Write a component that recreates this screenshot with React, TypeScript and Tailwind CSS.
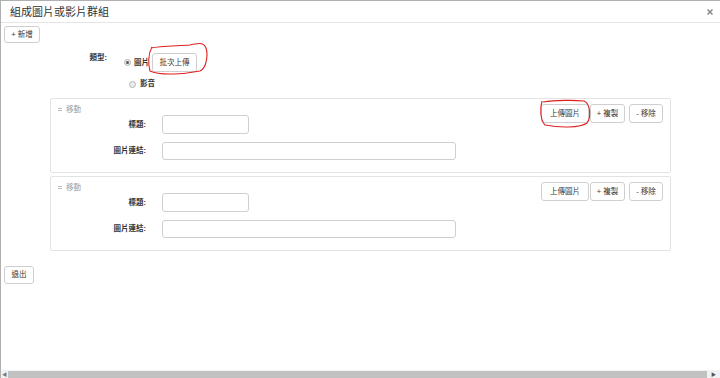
import React from 'react'

const btn =
  'h-[19px] px-0 whitespace-nowrap flex items-center justify-center border border-[#cfcfcf] rounded-[3px] bg-white text-[7.5px] text-[#333] leading-none shrink-0'

function Handle() {
  return (
    <svg width="5" height="5" viewBox="0 0 5 5" className="shrink-0">
      <line x1="0" y1="1.5" x2="4" y2="1.5" stroke="#aaa" strokeWidth="0.8" />
      <line x1="0" y1="3.5" x2="4" y2="3.5" stroke="#aaa" strokeWidth="0.8" />
    </svg>
  )
}

function Radio({ checked }: { checked?: boolean }) {
  return (
    <span className="w-[7px] h-[7px] rounded-full border border-[#b5b5b5] bg-[#ececec] flex items-center justify-center shrink-0">
      {checked && <span className="w-[3px] h-[3px] rounded-full bg-[#555]" />}
    </span>
  )
}

function ItemPanel({ className = '' }: { className?: string }) {
  return (
    <div className={`ml-[46px] w-[621px] border border-[#e3e3e3] rounded-[2px] pt-[5px] pb-[12px] pl-[7px] pr-[7px] flex justify-between ${className}`}>
      <div className="flex flex-col">
        <div className="h-[11px] flex items-center gap-[3px] text-[7.5px] text-[#999] leading-none">
          <Handle />
          <span>移動</span>
        </div>
        <div className="flex items-center">
          <div className="w-[88px] text-right text-[7.5px] font-bold text-[#333] whitespace-nowrap">標題:</div>
          <div className="ml-[16px] w-[87px] h-[19px] border border-[#cfcfcf] rounded-[3px] bg-white" />
        </div>
        <div className="flex items-center mt-[8px]">
          <div className="w-[88px] text-right text-[7.5px] font-bold text-[#333] whitespace-nowrap">圖片連結:</div>
          <div className="ml-[16px] w-[294px] h-[18px] border border-[#cfcfcf] rounded-[3px] bg-white" />
        </div>
      </div>
      <div className="flex items-start">
        <button className={`${btn} w-[48px]`}>上傳圖片</button>
        <button className={`${btn} w-[35px] ml-[1px]`}>+ 複製</button>
        <button className={`${btn} w-[34px] ml-[4px]`}>- 移除</button>
      </div>
    </div>
  )
}

export default function App() {
  return (
    <div className="relative w-[720px] h-[378px] overflow-hidden bg-white border-t border-l border-[#b0b0b0] flex flex-col font-['Liberation_Sans','Noto_Sans_CJK_TC',sans-serif]">
      {/* 標題列 */}
      <div className="h-[22px] shrink-0 border-b border-[#e5e5e5] flex items-center justify-between pl-[9px] pr-[7px]">
        <span className="text-[11px] text-[#333] leading-none font-['Noto_Sans_CJK_TC',sans-serif]">組成圖片或影片群組</span>
        <svg width="6" height="6" viewBox="0 0 6 6">
          <line x1="0.5" y1="0.5" x2="5.5" y2="5.5" stroke="#888" strokeWidth="1.5" />
          <line x1="5.5" y1="0.5" x2="0.5" y2="5.5" stroke="#888" strokeWidth="1.5" />
        </svg>
      </div>

      <div className="flex-1 pl-[3px] pt-[3px] flex flex-col">
        <button className="w-[36px] h-[17px] border border-[#cfcfcf] rounded-[3px] text-[7.5px] text-[#333] flex items-center justify-center leading-none whitespace-nowrap">
          + 新增
        </button>

        {/* 類型 */}
        <div className="flex mt-[10px]">
          <div className="w-[103px] text-right text-[7.5px] font-bold text-[#333] leading-none pt-[1px]">類型:</div>
          <div className="ml-[17px] flex flex-col">
            <div className="flex items-center h-[19px]">
              <Radio checked />
              <span className="ml-[3px] text-[7.5px] font-bold text-[#333] leading-none">圖片</span>
              <button className={`${btn} w-[45px] ml-[3px]`}>批次上傳</button>
            </div>
            <div className="flex items-center h-[12px] mt-[6px] ml-[5px]">
              <Radio />
              <span className="ml-[4px] text-[7.5px] font-bold text-[#333] leading-none">影音</span>
            </div>
          </div>
        </div>

        <ItemPanel className="mt-[8px]" />
        <ItemPanel className="mt-[3px]" />

        <button className="mt-[15px] w-[30px] h-[18px] border border-[#cfcfcf] rounded-[3px] text-[7.5px] text-[#333] flex items-center justify-center leading-none whitespace-nowrap">
          退出
        </button>
      </div>

      {/* 捲軸 */}
      <div className="h-[8px] shrink-0 bg-[#f1f1f1] flex items-center">
        <span className="w-[7px] text-center text-[5px] text-[#777] leading-none">◀</span>
        <div className="flex-1 h-[7px] bg-[#c1c1c1]" />
        <span className="w-[13px] text-center text-[5px] text-[#555] leading-none">▶</span>
      </div>

      {/* 紅色手繪圈 */}
      <svg className="absolute left-[-1px] top-[-1px] pointer-events-none" width="720" height="378" viewBox="0 0 720 378">
        <path
          d="M152 47 C148 54 148 64 150 71 C160 76 185 74 200 71 C207 68 208 54 206 48 C204 42 198 43 190 45 C175 46 160 46 151 48"
          fill="none"
          stroke="#e02020"
          strokeWidth="1.1"
        />
        <path
          d="M543 102 C555 100 575 100 584 101 C591 104 591 118 587 123 C580 128 560 128 545 125 C540 120 540 108 542 101"
          fill="none"
          stroke="#e02020"
          strokeWidth="1.1"
        />
      </svg>
    </div>
  )
}
